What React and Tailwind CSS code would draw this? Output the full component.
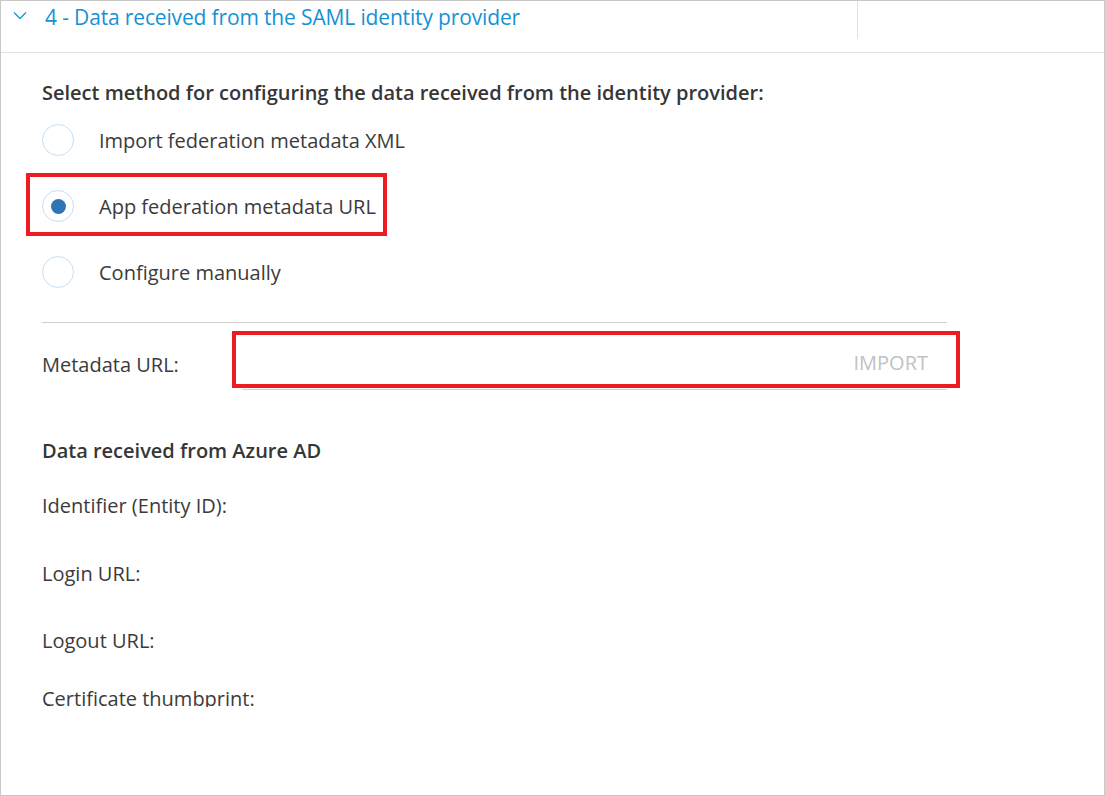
import { useState } from "react";

const font = { fontFamily: '"Open Sans", "Noto Sans", Arial, sans-serif' };

function Radio({ checked }) {
  return (
    <span className="grid h-[32px] w-[32px] flex-none place-items-center rounded-full border border-[#c6dff5] bg-white">
      {checked && <span className="h-[15px] w-[15px] rounded-full bg-[#2e75b6]" />}
    </span>
  );
}

export default function App() {
  const [method, setMethod] = useState("url");
  const options = [
    { id: "xml", label: "Import federation metadata XML" },
    { id: "url", label: "App federation metadata URL" },
    { id: "manual", label: "Configure manually" },
  ];

  return (
    <div style={font} className="h-[796px] w-[1105px] overflow-hidden border border-[#c8c8c8] bg-white text-[#3b3b3b]">
      <div className="flex h-[52px] border-b border-[#e1e1e1]">
        <div className="flex h-[38px] w-[857px] items-start border-r border-[#e1e1e1]">
          <svg className="ml-[12px] mt-[7px] h-[14px] w-[14px] text-[#1b95d6]" viewBox="0 0 14 14" fill="none" stroke="currentColor" strokeWidth="1.3">
            <path d="M1 4.5 7 10.5l6-6" />
          </svg>
          <span className="ml-[18px] pt-[2px] text-[21px] leading-[28px] tracking-[-0.15px] text-[#1592d4]">4 - Data received from the SAML identity provider</span>
        </div>
      </div>

      <div className="h-[654px] overflow-hidden px-[41px]">
        <h2 className="mt-[26px] text-[20px] font-semibold leading-[28px] text-[#363636]">Select method for configuring the data received from the identity provider:</h2>

        <div>
          {options.map((o) => (
            <label key={o.id} onClick={() => setMethod(o.id)} className="relative flex h-[66px] cursor-pointer items-center">
              <Radio checked={method === o.id} />
              <span className="ml-[25px] mt-[2px] text-[20px] leading-[28px]">{o.label}</span>
              {o.id === "url" && <span className="pointer-events-none absolute left-[-16px] top-0 h-[63px] w-[361px] border-4 border-[#ed1c24]" />}
            </label>
          ))}
        </div>

        <div className="mt-[17px] h-px w-[905px] bg-[#cfcfcf]" />

        <div className="flex items-end">
          <span className="mb-[11px] w-[200px] text-[20px] leading-[28px]">Metadata URL:</span>
          <div className="relative mt-[14px] flex h-[53px] w-[705px] items-center justify-end border-b border-[#c9d3e3] pr-[19px]">
            <input className="h-full flex-1 bg-transparent outline-none" />
            <span className="text-[20px] text-[#c2c2c2]">IMPORT</span>
            <span className="pointer-events-none absolute left-[-10px] right-[-13px] top-[-6px] bottom-[1px] border-4 border-[#ed1c24]" />
          </div>
        </div>

        <h3 className="mt-[47px] text-[20px] font-semibold leading-[28px] text-[#363636]">Data received from Azure AD</h3>
        <div className="mt-[27px] text-[20px] leading-[28px]">
          <p>Identifier (Entity ID):</p>
          <p className="mt-[40px]">Login URL:</p>
          <p className="mt-[39px]">Logout URL:</p>
          <p className="mt-[30px]">Certificate thumbprint:</p>
        </div>
      </div>
    </div>
  );
}
